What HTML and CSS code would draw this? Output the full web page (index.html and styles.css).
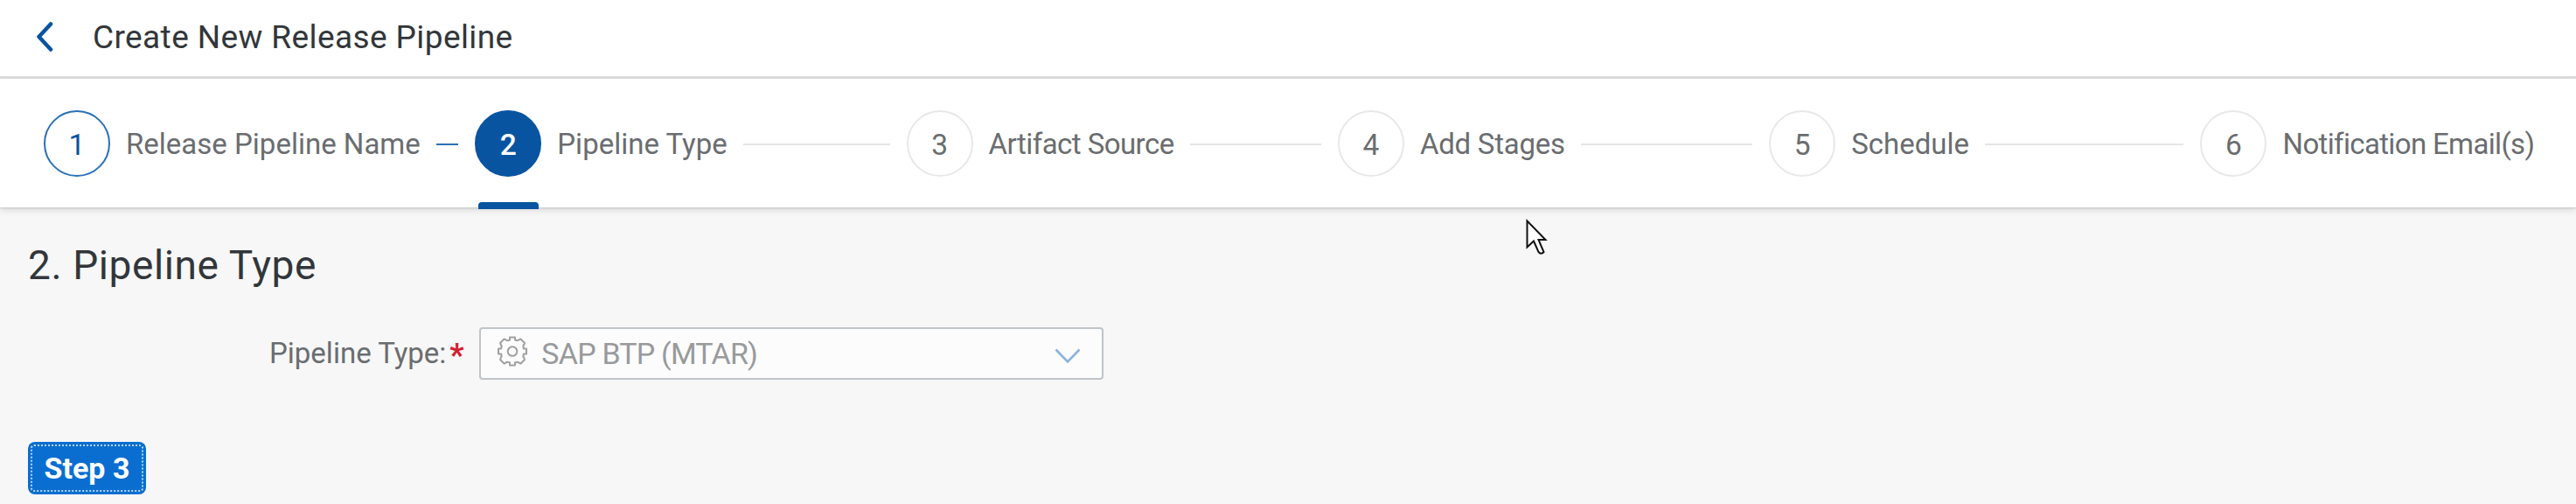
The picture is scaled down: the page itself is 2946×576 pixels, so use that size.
FILE: index.html
```
<!DOCTYPE html>
<html lang="en">
<head>
<meta charset="utf-8">
<title>Create New Release Pipeline</title>
<link rel="stylesheet" href="styles.css">
</head>
<body>
<header class="topbar">
  <svg class="back" viewBox="0 0 20 34" width="20" height="34"><path d="M17 2.500 3.500 17 17 31.500"/></svg>
  <h1 class="topbar-title">Create New Release Pipeline</h1>
</header>
<nav class="wizard">
  <div class="step done"><span class="circle">1</span><span class="label l1">Release Pipeline Name</span><i class="line"></i></div>
  <div class="step current"><span class="circle">2</span><span class="label l2">Pipeline Type</span><i class="line"></i></div>
  <div class="step"><span class="circle">3</span><span class="label l3">Artifact Source</span><i class="line"></i></div>
  <div class="step"><span class="circle">4</span><span class="label l4">Add Stages</span><i class="line"></i></div>
  <div class="step"><span class="circle">5</span><span class="label l5">Schedule</span><i class="line"></i></div>
  <div class="step"><span class="circle">6</span><span class="label l6">Notification Email(s)</span></div>
</nav>
<main class="content">
  <h2 class="section-title">2. Pipeline Type</h2>
  <div class="field">
    <label class="field-label">Pipeline Type:</label><span class="required">*</span>
    <div class="select">
      <svg class="gear" viewBox="-17 -17.500 34 35" width="34" height="35"><path d="M-3-16H3V-13Q6-11.500 8-13.500L9.500-14 14-9.500 13.500-8Q11.500-6 13-3H16V3H13Q11.500 6 13.500 8L14 9.500 9.500 14 8 13.500Q6 11.500 3 13V16H-3V13Q-6 11.500-8 13.500L-9.500 14-14 9.500-13.500 8Q-11.500 6-13 3H-16V-3H-13Q-11.500-6-13.500-8L-14-9.500-9.500-14-8-13.500Q-6-11.500-3-13Z"/><circle r="5.300"/></svg>
      <span class="select-text">SAP BTP (MTAR)</span>
      <svg class="chevron" viewBox="0 0 30 18" width="30" height="18"><path d="M1.500 1.500 15 15.500 28.500 1.500"/></svg>
    </div>
  </div>
  <button class="next"><span>Step 3</span></button>
</main>
<svg class="cursor" viewBox="0 0 25 42" width="25" height="42"><path d="M1.500 2.500V32.500L9 25.500 14.500 38Q17.500 41.500 20.500 38L14.500 24H22.500Z"/></svg>
</body>
</html>
```
FILE: styles.css
```
* { box-sizing: border-box; }
body { margin: 0; height: 576px; overflow: hidden; background: #f7f7f7; font-family: Roboto, sans-serif; color: #32363a; }
h1, h2 { margin: 0; font-weight: 400; white-space: nowrap; }
.topbar { display: flex; align-items: center; height: 90px; padding: 0 0 3px 41px; background: #fff; border-bottom: 3px solid #dedede; }
.back { flex: none; fill: none; stroke: #0854a0; stroke-width: 4.500px; stroke-linecap: round; stroke-linejoin: round; }
.topbar-title { margin-left: 45px; padding-top: 2px; font-size: 37px; line-height: 42px; letter-spacing: .4px; }
.wizard { display: flex; height: 147px; padding-left: 50px; background: #fff; box-shadow: 0 1px 2px #c8c8c8, 0 3px 8px rgba(0, 0, 0, .12); }
.step { position: relative; display: flex; align-items: center; flex: none; width: 493.300px; height: 147px; }
.circle { flex: none; width: 76px; height: 76px; border: 2px solid #e8e8e8; border-radius: 50%; font-size: 33.500px; line-height: 75px; text-align: center; color: #6a6d70; }
.label { flex: none; margin-left: 18px; padding-top: 2px; font-size: 33px; line-height: 40px; white-space: nowrap; color: #6a6d70; }
.l3 { letter-spacing: -.55px; }
.l4 { letter-spacing: -.25px; }
.l6 { letter-spacing: -.65px; }
.line { flex: 1; height: 2px; margin: 3px 19px 0 18px; background: #e5e5e5; }
.done .circle { border-color: #2a70b8; color: #0854a0; }
.done .line { background: #2a70b8; }
.current .circle { border-color: #0854a0; background: #0854a0; color: #fff; font-weight: 500; }
.current::after { content: ""; position: absolute; left: 4px; bottom: -2px; width: 69px; height: 8px; border-radius: 4px 4px 0 0; background: #0854a0; }
.content { display: flex; flex-direction: column; align-items: flex-start; padding: 38px 0 0 32px; }
.section-title { height: 56px; font-size: 46px; line-height: 56px; letter-spacing: .6px; }
.field { display: flex; margin: 43px 0 0 276px; height: 60px; align-items: center; }
.field-label { font-size: 33px; line-height: 40px; color: #6a6d70; white-space: nowrap; }
.required { width: 16px; margin-left: 4px; padding-top: 4px; font-size: 36px; font-weight: 700; line-height: 36px; color: #d32030; }
.select { display: flex; align-items: center; width: 714px; height: 60px; margin-left: 18px; padding: 0 24px 0 19px; border: 2px solid #bfc4c9; border-radius: 4px; background: #fcfcfc; }
.gear { margin-bottom: 6px; fill: none; stroke: #a0a0a0; stroke-width: 2px; stroke-linejoin: round; }
.select-text { margin-left: 16px; font-size: 34px; line-height: 40px; letter-spacing: -.8px; color: #989a9c; white-space: nowrap; }
.chevron { margin: 5px 0 0 auto; fill: none; stroke: #8ab3da; stroke-width: 2.600px; }
.next { display: flex; width: 135px; height: 60px; margin-top: 71px; padding: 3px; border: 0; border-radius: 8px; background: #0a6ed1; color: #fff; font-family: Roboto, sans-serif; font-size: 34px; font-weight: 700; }
.next span { flex: 1; border: 2px dotted #b5d4f1; border-radius: 4px; line-height: 50px; white-space: nowrap; text-align: center; }
.cursor { position: absolute; left: 1745px; top: 250px; fill: #fff; stroke: #111; stroke-width: 2px; }
```
